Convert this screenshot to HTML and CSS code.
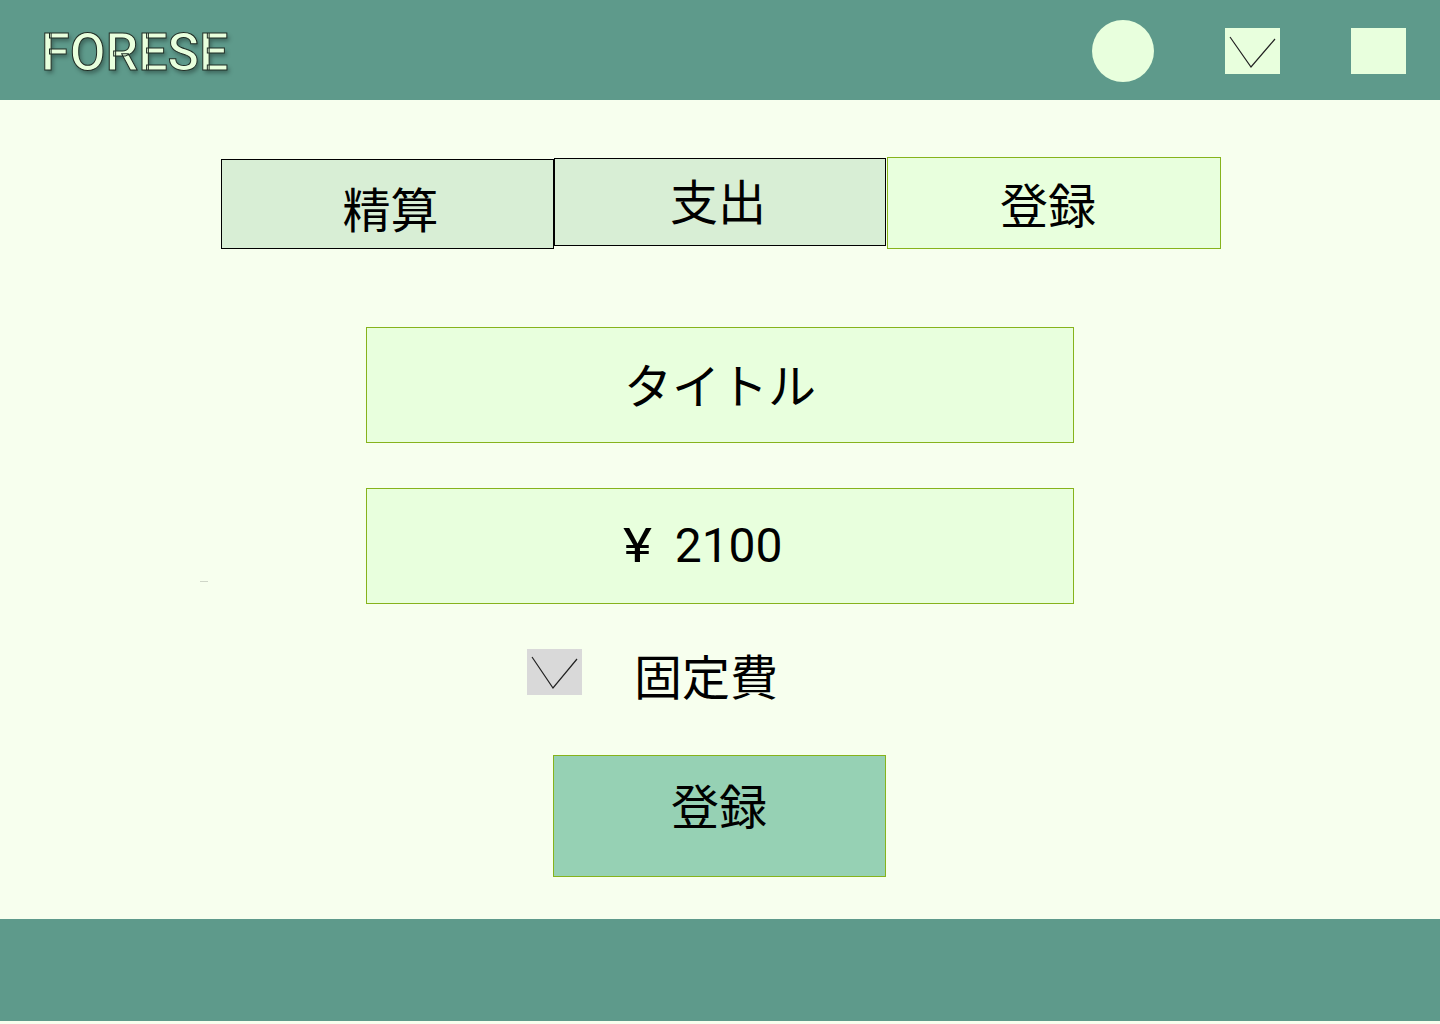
FILE: index.html
```html
<!DOCTYPE html>
<html lang="ja">
<head>
<meta charset="utf-8">
<title>FORESE</title>
<link rel="stylesheet" href="styles.css">
</head>
<body>
<header class="topbar">
  <div class="logo">FORESE</div>
  <div class="top-icons">
    <span class="icon-circle"></span>
    <span class="icon-check">
      <svg width="55" height="46" viewBox="0 0 55 46"><polyline points="5,9 26,39 50,11" fill="none" stroke="#222" stroke-width="1.2"/></svg>
    </span>
    <span class="icon-square"></span>
  </div>
</header>
<main class="content">
  <span class="stray"></span>
  <nav class="tabs">
    <div class="tab tab-a">精算</div>
    <div class="tab tab-b">支出</div>
    <div class="tab tab-c">登録</div>
  </nav>
  <div class="field field-title">タイトル</div>
  <div class="field field-amount"><span class="yen">¥</span><span class="amount">2100</span></div>
  <div class="fixed-row">
    <span class="checkbox">
      <svg width="55" height="46" viewBox="0 0 55 46"><polyline points="5,8 26,39 50,10" fill="none" stroke="#222" stroke-width="1.2"/></svg>
    </span>
    <span class="fixed-label">固定費</span>
  </div>
  <button class="submit">登録</button>
</main>
<footer class="bottombar"></footer>
</body>
</html>
```
FILE: styles.css
```css
* { box-sizing: border-box; }
html, body { margin: 0; padding: 0; }
body {
  background: #f7ffee;
  font-family: "Noto Sans CJK JP", "Noto Sans", sans-serif;
  color: #000;
  height: 1024px;
  overflow: hidden;
}
.topbar {
  height: 100px;
  background: #5e9a8b;
  display: flex;
  align-items: center;
  justify-content: space-between;
  padding: 0 34px 0 41px;
}
.logo {
  font-family: Roboto, "Noto Sans", sans-serif;
  font-size: 52px;
  font-weight: 500;
  line-height: 1;
  color: #e8ffdd;
  -webkit-text-stroke: 1px #1c2a22;
  text-shadow: 2px 3px 4px rgba(0, 0, 0, 0.35);
  margin-top: 5px;
}
.top-icons {
  display: flex;
  align-items: center;
  gap: 71px;
  margin-top: 2px;
}
.icon-circle {
  width: 62px; height: 62px;
  border-radius: 50%;
  background: #e8ffdd;
}
.icon-check, .icon-square {
  width: 55px; height: 46px;
  background: #e8ffdd;
  display: block;
}
.icon-check svg, .checkbox svg { display: block; }
.content {
  position: relative;
  height: 819px;
  display: flex;
  flex-direction: column;
  align-items: center;
}
.stray {
  position: absolute;
  left: 200px; top: 481px;
  width: 8px; height: 1px;
  background: #cfd6c8;
}
.tabs {
  display: flex;
  align-items: flex-start;
  margin-top: 57px;
  margin-left: 2px;
}
.tab {
  display: flex;
  align-items: center;
  justify-content: center;
  font-size: 48px;
  line-height: 1;
}
.tab-a {
  width: 333px; height: 90px;
  margin-top: 2px;
  background: #d8eed5;
  border: 1px solid #000;
  padding: 6px 0 0 6px;
}
.tab-b {
  width: 332px; height: 88px;
  margin-top: 1px;
  background: #d8eed5;
  border: 1px solid #000;
  padding: 0 4px 7px 0;
}
.tab-c {
  width: 334px; height: 92px;
  background: #e8ffdd;
  border: 1px solid #86b31c;
  padding: 0 12px 1px 0;
  margin-left: 1px;
}
.field {
  width: 708px;
  height: 116px;
  background: #e8ffdd;
  border: 1px solid #86b31c;
  display: flex;
  align-items: center;
  justify-content: center;
  font-size: 48px;
  line-height: 1;
}
.field-title { margin-top: 78px; padding-bottom: 4px; }
.field-amount {
  margin-top: 45px;
  font-family: Roboto, "Noto Sans", sans-serif;
  padding-right: 32px;
  align-items: baseline;
  padding-top: 33px;
  gap: 24px;
}
.yen { transform: scaleX(1.15); }
.fixed-row {
  width: 708px;
  height: 46px;
  margin-top: 45px;
  padding-left: 161px;
  display: flex;
  align-items: flex-start;
  gap: 52px;
}
.checkbox {
  width: 55px; height: 46px;
  background: #d9d9d9;
  display: block;
  flex: none;
}
.fixed-label {
  font-size: 48px;
  line-height: 1;
  margin-top: 1px;
}
.submit {
  width: 333px;
  height: 122px;
  margin: 60px 0 0 -2px;
  background: #96d1b4;
  border: 1px solid #86b31c;
  font-family: "Noto Sans CJK JP", "Noto Sans", sans-serif;
  font-size: 48px;
  line-height: 1;
  color: #000;
  padding: 0 0 24px 0;
  display: flex;
  align-items: center;
  justify-content: center;
}
.bottombar {
  height: 102px;
  background: #5e9a8b;
}
```
